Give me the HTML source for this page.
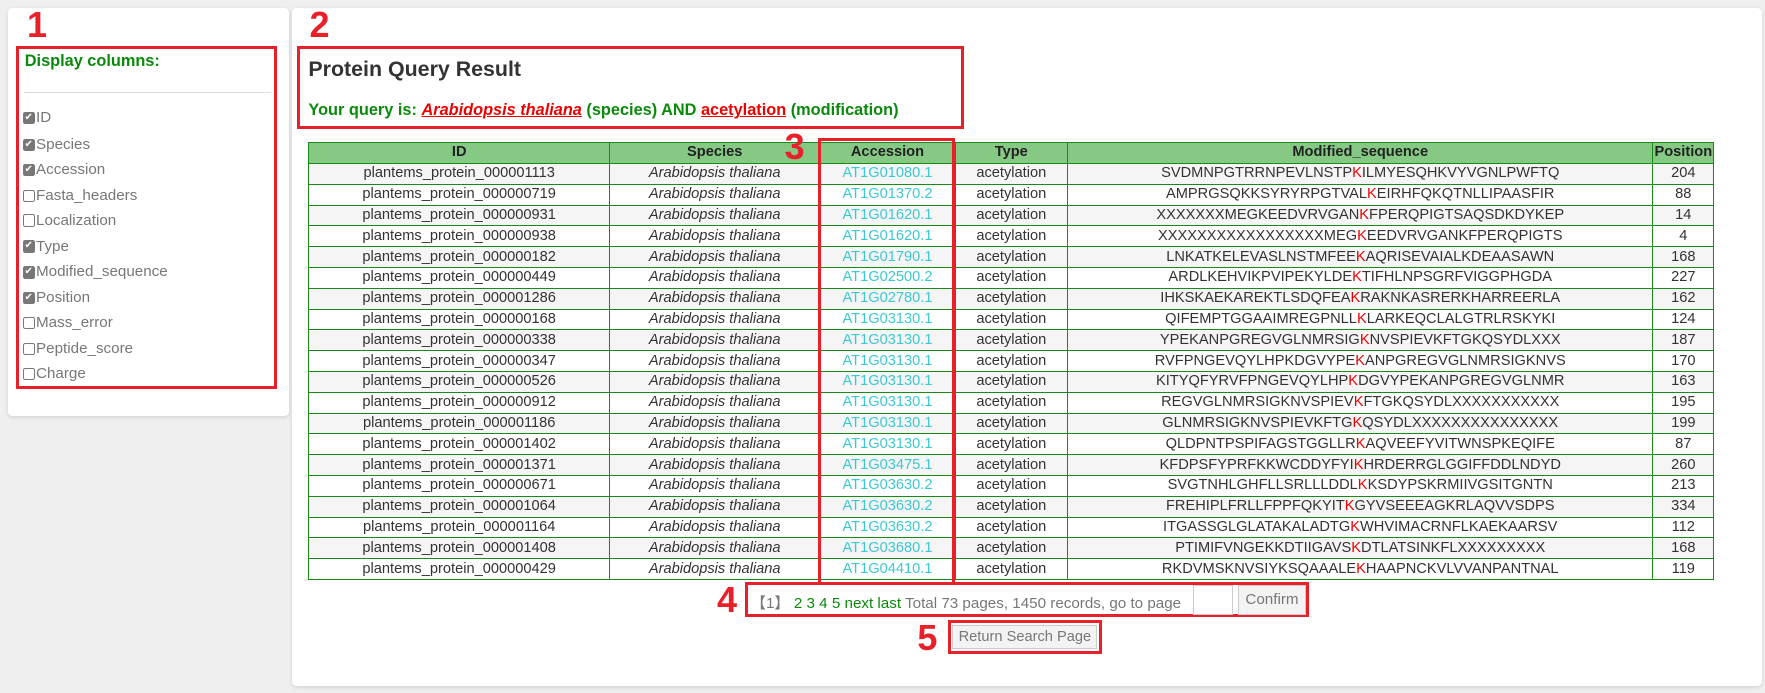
<!DOCTYPE html>
<html><head><meta charset="utf-8"><style>
body{margin:0;width:1765px;height:693px;background:#efefef;font-family:"Liberation Sans",sans-serif;overflow:hidden}
#w{position:relative;width:1568px;height:616px;zoom:1.12564}
.card{position:absolute;background:#fff;border-radius:4px;box-shadow:0 1px 4px rgba(0,0,0,.12)}
.red{position:absolute;border:3px solid #e8202a;box-sizing:border-box}
.num{position:absolute;color:#e8202a;font-weight:bold;font-size:32px;line-height:32px}
.cb{position:absolute;left:20px;font-size:13.5px;color:#777;line-height:16px;display:flex;align-items:center}
.cb i{display:inline-block;width:11px;height:11px;border:1px solid #777;border-radius:2px;box-sizing:border-box;font-style:normal;font-size:9px;line-height:9px;color:#fff;text-align:center;margin-right:1px}
.cb i.on{background:#777}
table{position:absolute;left:274px;top:126px;border-collapse:collapse;font-size:13px;color:#333;table-layout:fixed;width:1248px}
td,th{border:1px solid #188a18;padding:0;text-align:center;height:17.6px;line-height:17px;white-space:nowrap;overflow:hidden}
th{background:#85c985;height:18px;font-weight:bold;color:#222}
tr:nth-child(even) td{background:#f5f5f5}
td.a{color:#3cc8d0}
td.s{font-style:italic}
b.k{color:#e00;font-weight:normal}
</style></head><body><div id="w">
<div class="card" style="left:7px;top:7px;width:250px;height:363px"></div>
<div class="card" style="left:259px;top:7px;width:1306px;height:602px"></div>

<div class="num" style="left:24px;top:6px">1</div>
<div class="red" style="left:14px;top:41px;width:232px;height:305px"></div>
<div style="position:absolute;left:22px;top:46px;color:#0a8a0a;font-weight:bold;font-size:14.5px">Display columns:</div>
<div style="position:absolute;left:21px;top:82px;width:220px;border-top:1px solid #ddd"></div>
<div class="cb" style="top:97px"><i class="on">✔</i>ID</div>
<div class="cb" style="top:121px"><i class="on">✔</i>Species</div>
<div class="cb" style="top:143px"><i class="on">✔</i>Accession</div>
<div class="cb" style="top:166px"><i></i>Fasta_headers</div>
<div class="cb" style="top:188px"><i></i>Localization</div>
<div class="cb" style="top:211px"><i class="on">✔</i>Type</div>
<div class="cb" style="top:234px"><i class="on">✔</i>Modified_sequence</div>
<div class="cb" style="top:257px"><i class="on">✔</i>Position</div>
<div class="cb" style="top:279px"><i></i>Mass_error</div>
<div class="cb" style="top:302px"><i></i>Peptide_score</div>
<div class="cb" style="top:324px"><i></i>Charge</div>

<div class="num" style="left:275px;top:6px">2</div>
<div class="red" style="left:264px;top:41px;width:592px;height:74px"></div>
<div style="position:absolute;left:274px;top:51px;font-size:19px;font-weight:bold;color:#333">Protein Query Result</div>
<div style="position:absolute;left:274px;top:90px;font-size:14.5px;font-weight:bold;color:#0a8a0a">Your query is: <u style="color:#e00"><i>Arabidopsis thaliana</i></u> (species) AND <u style="color:#e00">acetylation</u> (modification)</div>

<table>
<colgroup><col style="width:267px"><col style="width:187px"><col style="width:120px"><col style="width:100px"><col style="width:520px"><col style="width:54px"></colgroup>
<tr><th>ID</th><th>Species</th><th>Accession</th><th>Type</th><th>Modified_sequence</th><th>Position</th></tr>
<tr><td>plantems_protein_000001113</td><td class="s">Arabidopsis thaliana</td><td class="a">AT1G01080.1</td><td>acetylation</td><td>SVDMNPGTRRNPEVLNSTP<b class="k">K</b>ILMYESQHKVYVGNLPWFTQ</td><td>204</td></tr>
<tr><td>plantems_protein_000000719</td><td class="s">Arabidopsis thaliana</td><td class="a">AT1G01370.2</td><td>acetylation</td><td>AMPRGSQKKSYRYRPGTVAL<b class="k">K</b>EIRHFQKQTNLLIPAASFIR</td><td>88</td></tr>
<tr><td>plantems_protein_000000931</td><td class="s">Arabidopsis thaliana</td><td class="a">AT1G01620.1</td><td>acetylation</td><td>XXXXXXXMEGKEEDVRVGAN<b class="k">K</b>FPERQPIGTSAQSDKDYKEP</td><td>14</td></tr>
<tr><td>plantems_protein_000000938</td><td class="s">Arabidopsis thaliana</td><td class="a">AT1G01620.1</td><td>acetylation</td><td>XXXXXXXXXXXXXXXXXMEG<b class="k">K</b>EEDVRVGANKFPERQPIGTS</td><td>4</td></tr>
<tr><td>plantems_protein_000000182</td><td class="s">Arabidopsis thaliana</td><td class="a">AT1G01790.1</td><td>acetylation</td><td>LNKATKELEVASLNSTMFEE<b class="k">K</b>AQRISEVAIALKDEAASAWN</td><td>168</td></tr>
<tr><td>plantems_protein_000000449</td><td class="s">Arabidopsis thaliana</td><td class="a">AT1G02500.2</td><td>acetylation</td><td>ARDLKEHVIKPVIPEKYLDE<b class="k">K</b>TIFHLNPSGRFVIGGPHGDA</td><td>227</td></tr>
<tr><td>plantems_protein_000001286</td><td class="s">Arabidopsis thaliana</td><td class="a">AT1G02780.1</td><td>acetylation</td><td>IHKSKAEKAREKTLSDQFEA<b class="k">K</b>RAKNKASRERKHARREERLA</td><td>162</td></tr>
<tr><td>plantems_protein_000000168</td><td class="s">Arabidopsis thaliana</td><td class="a">AT1G03130.1</td><td>acetylation</td><td>QIFEMPTGGAAIMREGPNLL<b class="k">K</b>LARKEQCLALGTRLRSKYKI</td><td>124</td></tr>
<tr><td>plantems_protein_000000338</td><td class="s">Arabidopsis thaliana</td><td class="a">AT1G03130.1</td><td>acetylation</td><td>YPEKANPGREGVGLNMRSIG<b class="k">K</b>NVSPIEVKFTGKQSYDLXXX</td><td>187</td></tr>
<tr><td>plantems_protein_000000347</td><td class="s">Arabidopsis thaliana</td><td class="a">AT1G03130.1</td><td>acetylation</td><td>RVFPNGEVQYLHPKDGVYPE<b class="k">K</b>ANPGREGVGLNMRSIGKNVS</td><td>170</td></tr>
<tr><td>plantems_protein_000000526</td><td class="s">Arabidopsis thaliana</td><td class="a">AT1G03130.1</td><td>acetylation</td><td>KITYQFYRVFPNGEVQYLHP<b class="k">K</b>DGVYPEKANPGREGVGLNMR</td><td>163</td></tr>
<tr><td>plantems_protein_000000912</td><td class="s">Arabidopsis thaliana</td><td class="a">AT1G03130.1</td><td>acetylation</td><td>REGVGLNMRSIGKNVSPIEV<b class="k">K</b>FTGKQSYDLXXXXXXXXXXX</td><td>195</td></tr>
<tr><td>plantems_protein_000001186</td><td class="s">Arabidopsis thaliana</td><td class="a">AT1G03130.1</td><td>acetylation</td><td>GLNMRSIGKNVSPIEVKFTG<b class="k">K</b>QSYDLXXXXXXXXXXXXXXX</td><td>199</td></tr>
<tr><td>plantems_protein_000001402</td><td class="s">Arabidopsis thaliana</td><td class="a">AT1G03130.1</td><td>acetylation</td><td>QLDPNTPSPIFAGSTGGLLR<b class="k">K</b>AQVEEFYVITWNSPKEQIFE</td><td>87</td></tr>
<tr><td>plantems_protein_000001371</td><td class="s">Arabidopsis thaliana</td><td class="a">AT1G03475.1</td><td>acetylation</td><td>KFDPSFYPRFKKWCDDYFYI<b class="k">K</b>HRDERRGLGGIFFDDLNDYD</td><td>260</td></tr>
<tr><td>plantems_protein_000000671</td><td class="s">Arabidopsis thaliana</td><td class="a">AT1G03630.2</td><td>acetylation</td><td>SVGTNHLGHFLLSRLLLDDL<b class="k">K</b>KSDYPSKRMIIVGSITGNTN</td><td>213</td></tr>
<tr><td>plantems_protein_000001064</td><td class="s">Arabidopsis thaliana</td><td class="a">AT1G03630.2</td><td>acetylation</td><td>FREHIPLFRLLFPPFQKYIT<b class="k">K</b>GYVSEEEAGKRLAQVVSDPS</td><td>334</td></tr>
<tr><td>plantems_protein_000001164</td><td class="s">Arabidopsis thaliana</td><td class="a">AT1G03630.2</td><td>acetylation</td><td>ITGASSGLGLATAKALADTG<b class="k">K</b>WHVIMACRNFLKAEKAARSV</td><td>112</td></tr>
<tr><td>plantems_protein_000001408</td><td class="s">Arabidopsis thaliana</td><td class="a">AT1G03680.1</td><td>acetylation</td><td>PTIMIFVNGEKKDTIIGAVS<b class="k">K</b>DTLATSINKFLXXXXXXXXX</td><td>168</td></tr>
<tr><td>plantems_protein_000000429</td><td class="s">Arabidopsis thaliana</td><td class="a">AT1G04410.1</td><td>acetylation</td><td>RKDVMSKNVSIYKSQAAALE<b class="k">K</b>HAAPNCKVLVVANPANTNAL</td><td>119</td></tr>
</table>

<div class="num" style="left:697px;top:115px">3</div>
<div class="red" style="left:727px;top:123px;width:121px;height:397px"></div>

<div class="num" style="left:637px;top:517px">4</div>
<div class="red" style="left:662px;top:517px;width:501px;height:31px"></div>
<div style="position:absolute;left:667px;top:525px;font-size:13.5px;color:#777;white-space:nowrap">【1】 <span style="color:#0a8a0a">2 3 4 5 next last</span> Total 73 pages, 1450 records, go to page</div>
<div style="position:absolute;left:1060px;top:520px;width:35px;height:26px;border:1px solid #ccc;box-sizing:border-box;background:#fff"></div>
<div style="position:absolute;left:1100px;top:520px;width:60px;height:26px;border:1px solid #ccc;background:#f3f3f3;box-sizing:border-box;font-size:13.5px;color:#777;text-align:center;line-height:24px">Confirm</div>

<div class="num" style="left:815px;top:551px">5</div>
<div class="red" style="left:842px;top:551px;width:137px;height:30px"></div>
<div style="position:absolute;left:846px;top:555px;width:129px;height:22px;border:1px solid #ccc;background:#f3f3f3;box-sizing:border-box;font-size:13px;color:#777;text-align:center;line-height:20px">Return Search Page</div>
</div></body></html>
